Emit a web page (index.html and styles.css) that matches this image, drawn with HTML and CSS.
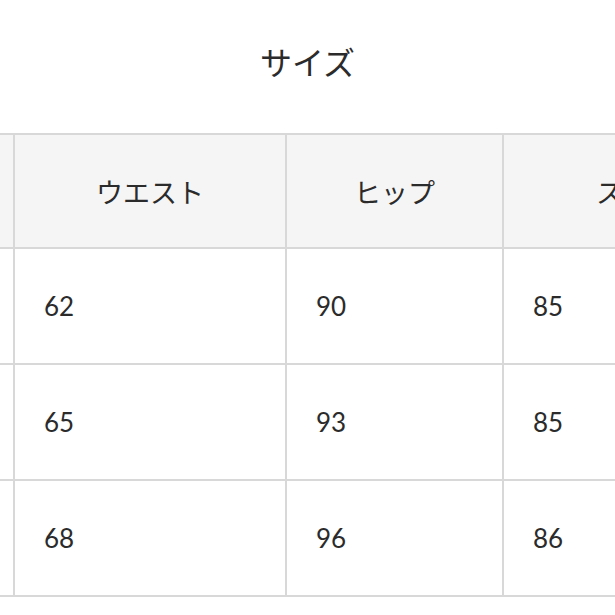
FILE: index.html
```html
<!DOCTYPE html>
<html lang="ja">
<head>
<meta charset="utf-8">
<link rel="stylesheet" href="styles.css">
</head>
<body>
<div class="page">
  <h2 class="title">サイズ</h2>
  <table class="size-table">
    <thead>
      <tr>
        <th class="c1">サイズ</th>
        <th class="c2">ウエスト</th>
        <th class="c3">ヒップ</th>
        <th class="c4">スカート丈</th>
      </tr>
    </thead>
    <tbody>
      <tr><td>S</td><td>62</td><td>90</td><td>85</td></tr>
      <tr><td>M</td><td>65</td><td>93</td><td>85</td></tr>
      <tr><td>L</td><td>68</td><td>96</td><td>86</td></tr>
    </tbody>
  </table>
</div>
</body>
</html>
```

FILE: styles.css
```css
html, body {
  margin: 0;
  padding: 0;
  background: #ffffff;
}
body {
  width: 615px;
  height: 615px;
  overflow: hidden;
  font-family: Lato, "Noto Sans CJK JP", sans-serif;
  color: #2b2b2b;
}
.page {
  display: flex;
  flex-direction: column;
}
.title {
  margin: 0;
  padding-top: 43px;
  height: 90px;
  box-sizing: border-box;
  line-height: 36px;
  font-size: 32px;
  font-weight: 400;
  text-align: center;
  font-family: "Noto Sans CJK JP", sans-serif;
}
.size-table {
  border-collapse: separate;
  border-spacing: 0;
  table-layout: fixed;
  margin-top: 43px;
  margin-left: -187px;
  width: 1010px;
  border-top: 2px solid #d8d8d8;
  border-left: 2px solid #d8d8d8;
  flex: none;
}
.size-table th,
.size-table td {
  box-sizing: border-box;
  border-right: 2px solid #d8d8d8;
  border-bottom: 2px solid #d8d8d8;
  padding: 0;
}
.size-table th {
  height: 114px;
  background: #f5f5f5;
  font-family: "Noto Sans CJK JP", sans-serif;
  font-weight: 400;
  font-size: 27px;
  text-align: center;
  vertical-align: middle;
}
.size-table td {
  height: 116px;
  font-size: 26px;
  text-align: left;
  vertical-align: middle;
  padding-left: 29px;
}
.c1 { width: 200px; }
.c2 { width: 272px; }
.c3 { width: 217px; }
.c4 { width: 321px; }
```
